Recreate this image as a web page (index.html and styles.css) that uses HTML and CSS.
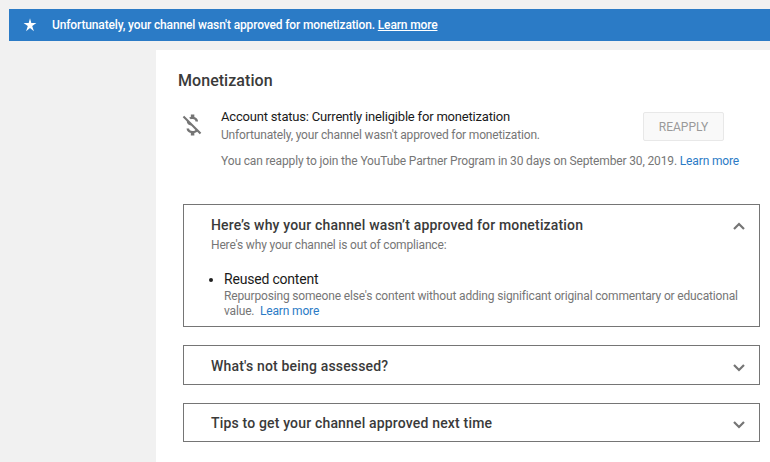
FILE: index.html
```html
<!DOCTYPE html>
<html lang="en">
<head>
<meta charset="utf-8">
<title>Monetization</title>
<link rel="stylesheet" href="styles.css">
</head>
<body>
<div class="banner">
  <span class="banner-star"><svg viewBox="0 0 14 14" width="14" height="14"><polygon fill="#fff" points="7,0.3 8.3,5 13.4,5 9.2,8 10.9,13.2 7,10 3.1,13.2 4.8,8 0.6,5 5.7,5"/></svg></span>
  <span class="banner-text">Unfortunately, your channel wasn't approved for monetization. <a href="#">Learn more</a></span>
</div>
<div class="layout">
  <main class="card">
    <h1 class="title">Monetization</h1>
    <section class="status">
      <svg class="status-icon" viewBox="0 0 24 24" width="28" height="28"><path fill="#757575" d="M12.5 6.9c1.78 0 2.44.85 2.5 2.1h2.21c-.07-1.72-1.12-3.3-3.21-3.81V3h-3v2.16c-.53.12-1.03.3-1.48.54l1.47 1.47c.41-.17.91-.27 1.51-.27zM5.33 4.06L4.06 5.33 7.5 8.77c0 2.08 1.56 3.21 3.91 3.91l3.51 3.51c-.34.48-1.05.91-2.42.91-2.06 0-2.87-.92-2.98-2.1h-2.2c.12 2.19 1.76 3.42 3.68 3.83V21h3v-2.15c.96-.18 1.82-.55 2.45-1.12l2.22 2.22 1.27-1.27L5.33 4.06z"/></svg>
      <div class="status-body">
        <div class="status-top">
          <div class="status-lines">
            <div class="status-head">Account status: Currently ineligible for monetization</div>
            <div class="muted">Unfortunately, your channel wasn't approved for monetization.</div>
          </div>
          <button class="reapply" type="button">REAPPLY</button>
        </div>
        <div class="muted reapply-note">You can reapply to join the YouTube Partner Program in 30 days on September 30, 2019. <a class="link" href="#">Learn more</a></div>
      </div>
    </section>
    <section class="panel panel-open">
      <div class="panel-head">
        <h2 class="panel-title">Here’s why your channel wasn’t approved for monetization</h2>
        <svg class="chev" viewBox="0 0 14 9" width="14" height="9"><path d="M2 7l5-5 5 5" fill="none" stroke="#757575" stroke-width="2.2"/></svg>
      </div>
      <div class="muted panel-sub">Here's why your channel is out of compliance:</div>
      <ul class="reasons">
        <li>
          <div class="reason-name">Reused content</div>
          <div class="muted reason-text">Repurposing someone else's content without adding significant original commentary or educational value.&nbsp; <a class="link" href="#">Learn more</a></div>
        </li>
      </ul>
    </section>
    <section class="panel panel-closed">
      <h2 class="panel-title">What's not being assessed?</h2>
      <svg class="chev" viewBox="0 0 14 9" width="14" height="9"><path d="M2 2l5 5 5-5" fill="none" stroke="#757575" stroke-width="2.2"/></svg>
    </section>
    <section class="panel panel-closed panel-last">
      <h2 class="panel-title">Tips to get your channel approved next time</h2>
      <svg class="chev" viewBox="0 0 14 9" width="14" height="9"><path d="M2 2l5 5 5-5" fill="none" stroke="#757575" stroke-width="2.2"/></svg>
    </section>
  </main>
</div>
</body>
</html>
```
FILE: styles.css
```css
html, body { margin: 0; padding: 0; }
body {
  width: 770px;
  height: 462px;
  overflow: hidden;
  background: #f1f1f1;
  font-family: Roboto, "Liberation Sans", sans-serif;
  color: #212121;
}
.banner {
  margin: 9px 0 0 9px;
  height: 32px;
  background: #2b7bc6;
  color: #fff;
  display: flex;
  align-items: center;
  font-size: 12px;
  font-weight: 500;
  letter-spacing: -.14px;
}
.banner-star { width: 43px; padding-left: 14px; box-sizing: border-box; display: flex; }
.banner a { color: #fff; }
.layout { padding: 9px 0 0 156px; }
.card {
  background: #fff;
  height: 412px;
  padding: 21px 10px 0 22px;
  box-sizing: border-box;
}
.title { margin: 0; font-size: 16px; font-weight: 500; line-height: 20px; color: #3a3a3a; letter-spacing: .05px; }
.status { display: flex; margin-top: 17px; }
.status-icon { margin: 3px 0 0 0; flex: none; }
.status-body { margin-left: 15px; width: 503px; }
.status-top { display: flex; justify-content: space-between; align-items: flex-start; }
.status-head { font-size: 13px; line-height: 17px; color: #1a1a1a; letter-spacing: -.19px; }
.muted { font-size: 12px; line-height: 15px; color: #767676; letter-spacing: -.16px; }
.status-lines .muted { margin-top: 3px; }
.reapply {
  width: 81px;
  height: 29px;
  margin: 4px 0 0 0;
  border: 1px solid #e8e8e8;
  border-radius: 2px;
  background: #f9f9f9;
  color: #9a9a9a;
  font: 400 12px Roboto, sans-serif;
  padding: 0;
  flex: none;
}
.reapply-note { margin-top: 11px; white-space: nowrap; letter-spacing: -.14px; }
.link { color: #2b7bc6; text-decoration: none; }
.panel {
  margin-left: 5px;
  width: 577px;
  box-sizing: border-box;
  border: 1px solid #757575;
}
.panel-open { margin-top: 35px; height: 123px; padding: 12px 0 0 27px; }
.panel-head { display: flex; justify-content: space-between; align-items: center; padding-right: 13px; }
.panel-title { margin: 0; font-size: 14px; font-weight: 500; line-height: 17px; color: #3a3a3a; letter-spacing: .17px; }
.chev { margin-top: 2px; flex: none; }
.panel-sub { margin-top: 4px; }
.reasons { margin: 18px 0 0; padding: 0 0 0 13px; font-size: 14px; }
.reason-name { font-size: 14px; line-height: 17px; color: #1a1a1a; letter-spacing: -.2px; }
.reason-text { padding-right: 12px; line-height: 15px; margin-top: 1px; }
.panel-closed {
  margin-top: 18px;
  height: 40px;
  padding: 2px 13px 0 27px;
  display: flex;
  justify-content: space-between;
  align-items: center;
}
.panel-last { height: 39px; }
```
